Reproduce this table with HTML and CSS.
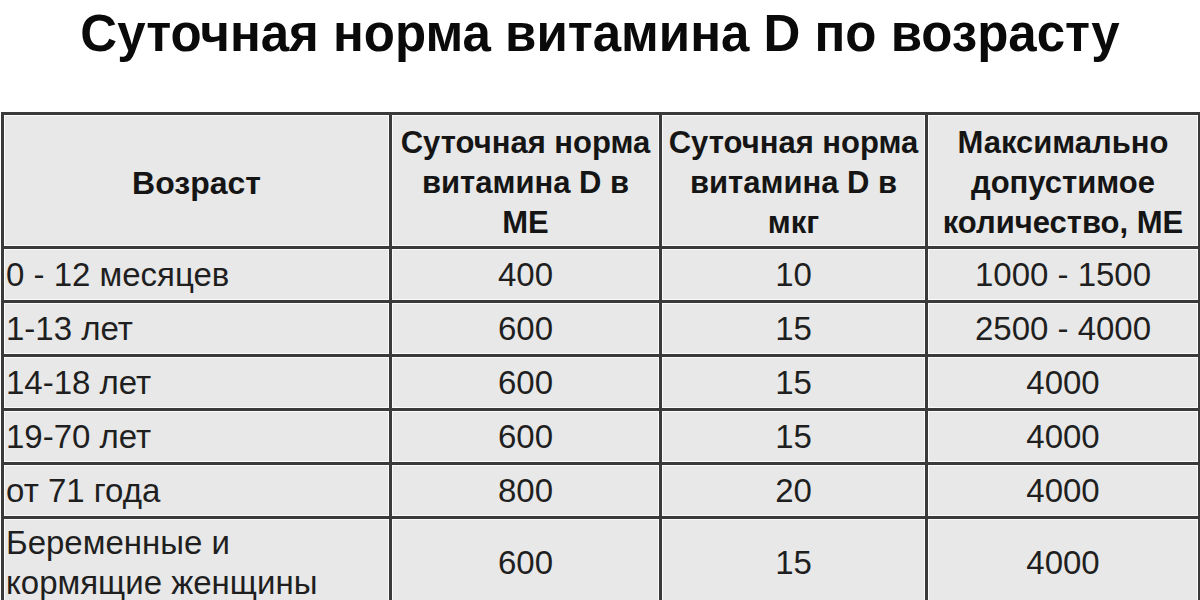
FILE: index.html
```html
<!DOCTYPE html>
<html lang="ru">
<head>
<meta charset="utf-8">
<link rel="stylesheet" href="styles.css">
</head>
<body>
<div class="page">
  <h1 class="title">Суточная норма витамина D по возрасту</h1>
  <table class="norms">
    <colgroup>
      <col class="c1"><col class="c2"><col class="c3"><col class="c4">
    </colgroup>
    <thead>
      <tr class="head">
        <th class="age-head">Возраст</th>
        <th>Суточная норма<br>витамина D в<br>МЕ</th>
        <th>Суточная норма<br>витамина D в<br>мкг</th>
        <th>Максимально<br>допустимое<br>количество, МЕ</th>
      </tr>
    </thead>
    <tbody>
      <tr><td class="age">0 - 12 месяцев</td><td>400</td><td>10</td><td>1000 - 1500</td></tr>
      <tr><td class="age">1-13 лет</td><td>600</td><td>15</td><td>2500 - 4000</td></tr>
      <tr><td class="age">14-18 лет</td><td>600</td><td>15</td><td>4000</td></tr>
      <tr><td class="age">19-70 лет</td><td>600</td><td>15</td><td>4000</td></tr>
      <tr><td class="age">от 71 года</td><td>800</td><td>20</td><td>4000</td></tr>
      <tr class="last"><td class="age">Беременные и<br>кормящие женщины</td><td>600</td><td>15</td><td>4000</td></tr>
    </tbody>
  </table>
</div>
</body>
</html>
```

FILE: styles.css
```css
html, body {
  margin: 0;
  padding: 0;
  background: #ffffff;
}
body {
  width: 1200px;
  height: 600px;
  overflow: hidden;
  font-family: "Liberation Sans", Arial, sans-serif;
  color: #111;
}
.page {
  display: flex;
  flex-direction: column;
  align-items: flex-start;
}
.title {
  align-self: stretch;
  margin: 0;
  padding-top: 3px;
  height: 112px;
  box-sizing: border-box;
  text-align: center;
  font-size: 51px;
  font-weight: bold;
  line-height: 62px;
  color: #0a0a0a;
}
.norms {
  margin-left: 1px;
  border-collapse: collapse;
  table-layout: fixed;
  width: 1197px;
  background: #e8e8e8;
}
.c1 { width: 388px; }
.c2 { width: 270px; }
.c3 { width: 266px; }
.c4 { width: 273px; }
.norms th,
.norms td {
  border: 3px solid #3a3a3a;
  box-shadow: inset 1px 1px 0 #fbfbfb, inset -1px -1px 0 #fbfbfb;
  padding: 0;
  text-align: center;
  vertical-align: middle;
}
.norms th {
  height: 134px;
  padding-top: 4px;
  box-sizing: border-box;
  font-size: 31px;
  font-weight: bold;
  line-height: 40px;
  color: #151515;
  white-space: nowrap;
}
.norms th.age-head {
  font-size: 32px;
}
.norms td {
  height: 51px;
  font-size: 33px;
  line-height: 38px;
  color: #1f1f1f;
}
.norms td.age {
  text-align: left;
  padding-left: 2px;
}
.norms tr.last td {
  height: 84px;
  line-height: 40px;
  border-bottom: none;
  padding-top: 2px;
}
```
